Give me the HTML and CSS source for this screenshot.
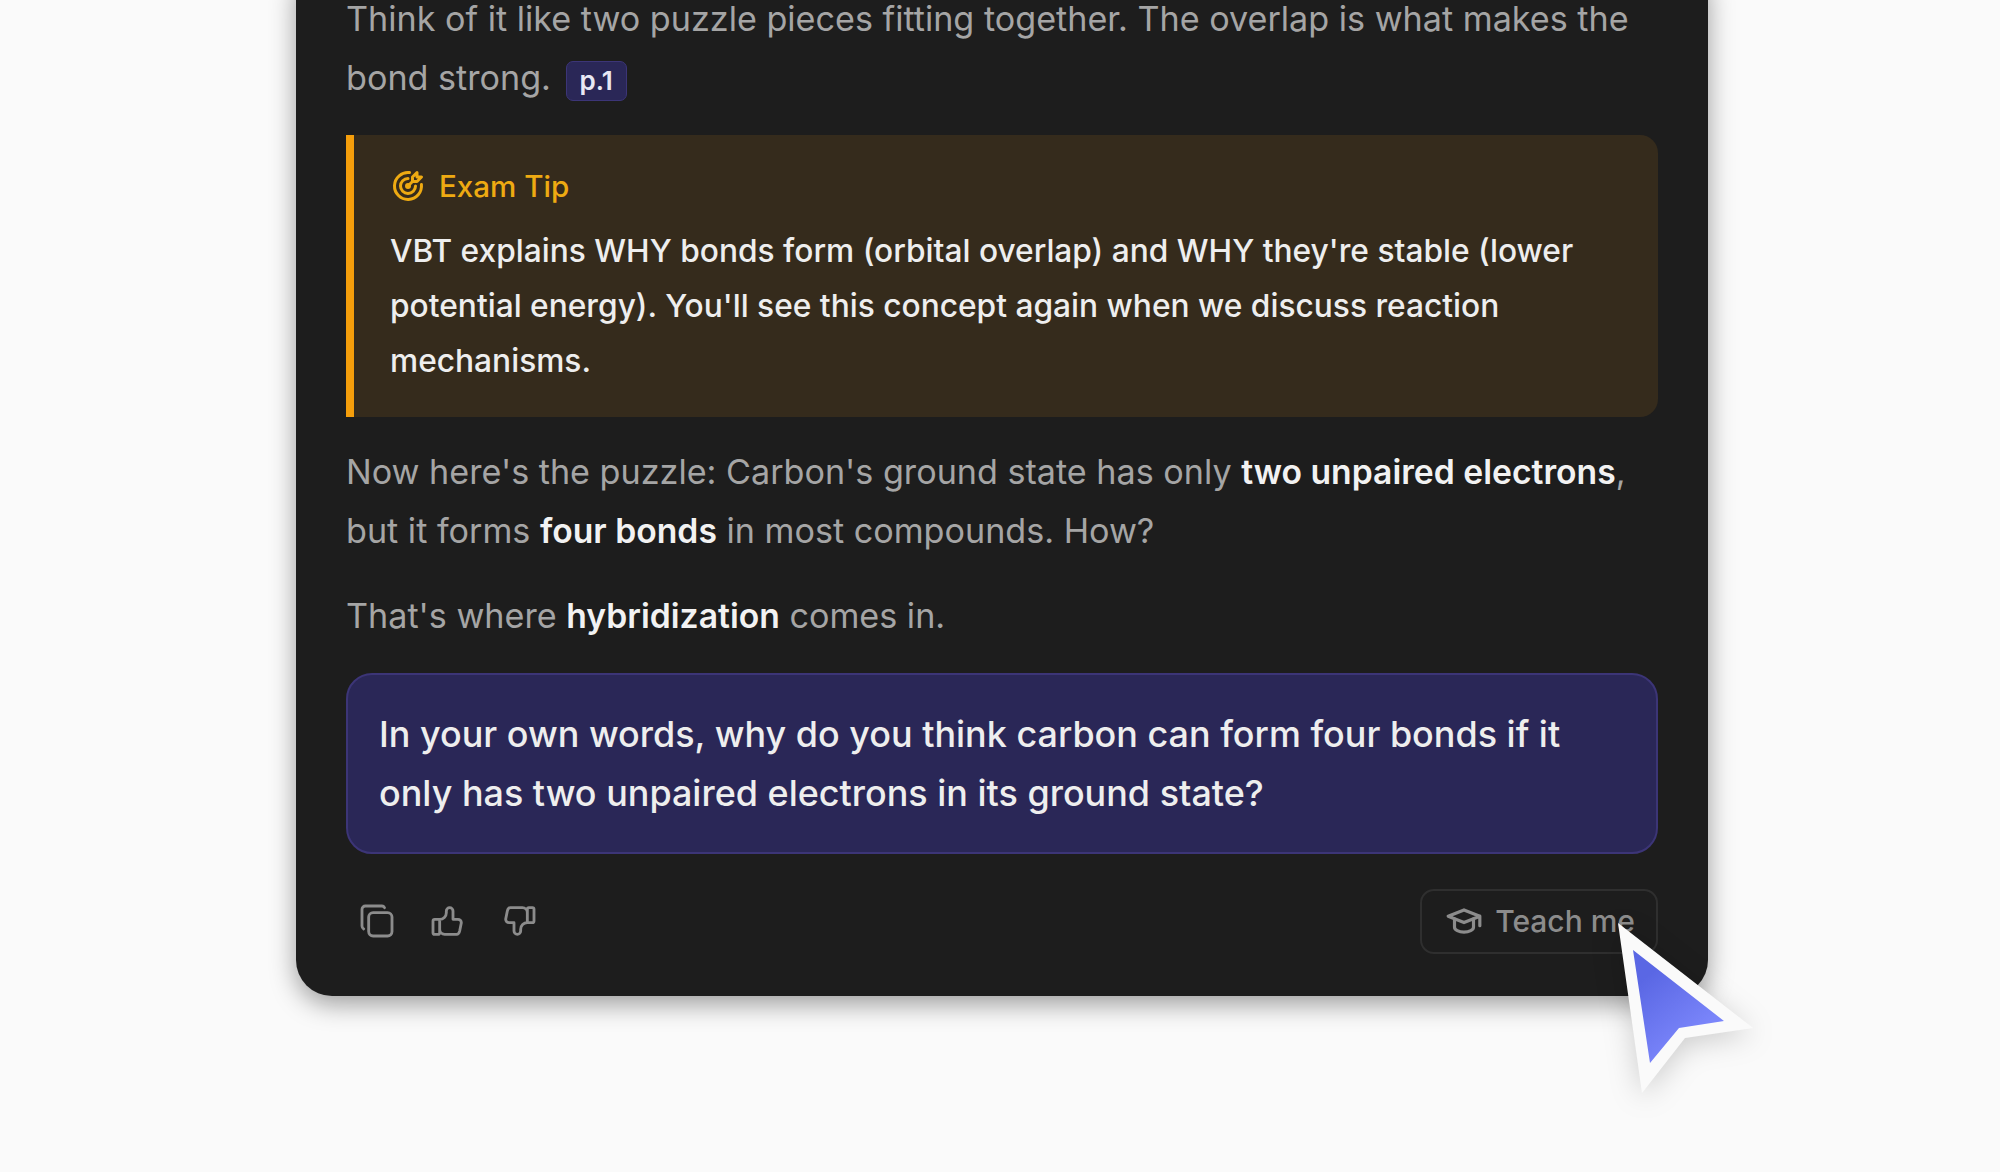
FILE: index.html
```html
<!DOCTYPE html>
<html lang="en">
<head>
    <meta charset="UTF-8">
    <title>Teach me</title>
    <link rel="stylesheet" href="styles.css">
</head>
<body>
    <div class="chat-card">
        <p class="para para-first">Think of it like two puzzle pieces fitting together. The overlap is what makes the bond strong. <span class="page-ref">p.1</span></p>

        <div class="tip-box">
            <div class="tip-title">
                <svg class="tip-icon" viewBox="0 0 24 24">
                    <path d="M11 12a1 1 0 1 0 2 0a1 1 0 0 0 -2 0"/>
                    <path d="M12 7a5 5 0 1 0 5 5"/>
                    <path d="M13 3.055a9 9 0 1 0 7.941 7.945"/>
                    <path d="M15 6v3h3l3 -3h-3v-3z"/>
                    <path d="M15 9l-3 3"/>
                </svg>
                <span>Exam Tip</span>
            </div>
            <p class="tip-text">VBT explains WHY bonds form (orbital overlap) and WHY they're stable (lower potential energy). You'll see this concept again when we discuss reaction mechanisms.</p>
        </div>

        <p class="para">Now here's the puzzle: Carbon's ground state has only <strong>two unpaired electrons</strong>, but it forms <strong>four bonds</strong> in most compounds. How?</p>
        <p class="para">That's where <strong>hybridization</strong> comes in.</p>

        <div class="question-box">In your own words, why do you think carbon can form four bonds if it only has two unpaired electrons in its ground state?</div>

        <div class="actions">
            <div class="action-icons">
                <svg class="icon" viewBox="0 0 24 24">
                    <path d="M7 9.667a2.667 2.667 0 0 1 2.667 -2.667h8.666a2.667 2.667 0 0 1 2.667 2.667v8.666a2.667 2.667 0 0 1 -2.667 2.667h-8.666a2.667 2.667 0 0 1 -2.667 -2.667z"/>
                    <path d="M4.012 16.737a2.005 2.005 0 0 1 -1.012 -1.737v-10c0 -1.1 .9 -2 2 -2h10c.75 0 1.158 .385 1.5 1"/>
                </svg>
                <svg class="icon" viewBox="0 0 24 24">
                    <path d="M7 11v8a1 1 0 0 1 -1 1h-2a1 1 0 0 1 -1 -1v-7a1 1 0 0 1 1 -1h3a4 4 0 0 0 4 -4v-1a2 2 0 0 1 4 0v5h3a2 2 0 0 1 2 2l-1 5a2 3 0 0 1 -2 2h-7a3 3 0 0 1 -3 -3"/>
                </svg>
                <svg class="icon" viewBox="0 0 24 24">
                    <path transform="rotate(180 12 12)" d="M7 11v8a1 1 0 0 1 -1 1h-2a1 1 0 0 1 -1 -1v-7a1 1 0 0 1 1 -1h3a4 4 0 0 0 4 -4v-1a2 2 0 0 1 4 0v5h3a2 2 0 0 1 2 2l-1 5a2 3 0 0 1 -2 2h-7a3 3 0 0 1 -3 -3"/>
                </svg>
            </div>
            <button class="teach-btn">
                <svg class="icon icon-cap" viewBox="0 0 24 24">
                    <path d="M22 9l-10 -4l-10 4l10 4l10 -4v6"/>
                    <path d="M6 10.6v5.4a6 3 0 0 0 12 0v-5.4"/>
                </svg>
                <span>Teach me</span>
            </button>
        </div>
    </div>

    <!-- cursor over the button -->
    <svg class="cursor" viewBox="0 0 180 210">
        <defs>
            <linearGradient id="cursorFill" x1="0.2" y1="0.2" x2="0.6" y2="0.8">
                <stop offset="0" stop-color="#5a67e4"/>
                <stop offset="1" stop-color="#7a85fa"/>
            </linearGradient>
        </defs>
        <polygon points="18,18 153,123 85,133 42,188" fill="#fafafa"/>
        <polygon points="33,45 124,116 79,123 50,158" fill="url(#cursorFill)"/>
    </svg>
</body>
</html>
```

FILE: styles.css
```css
body {
    margin: 0;
    height: 1172px;
    overflow: hidden;
    position: relative;
    background: #fafafa;
    font-family: Inter, 'Liberation Sans', sans-serif;
}

.chat-card {
    width: 1412px;
    box-sizing: border-box;
    margin: -40px 0 0 296px;
    padding: 30px 50px 42px;
    background: #1d1d1d;
    border-radius: 36px;
    box-shadow: 0 8px 26px rgba(0,0,0,0.38);
}

.para {
    margin: 0 0 27px;
    font-size: 34.15px;
    line-height: 58.5px;
    color: #a5a5a5;
}

.para-first {
    margin-bottom: 28px;
}

.para strong {
    color: #f2f2f2;
    font-size: 33.7px;
    font-weight: 600;
}

.page-ref {
    display: inline-block;
    margin-left: 5px;
    padding: 0 13px;
    font-size: 26px;
    line-height: 38px;
    font-weight: 600;
    color: #e8e8f4;
    background: #2a2757;
    border: 1px solid #3c3577;
    border-radius: 7px;
}

.tip-box {
    margin-bottom: 26px;
    padding: 27px 36px 29px;
    background: #352b1c;
    border-left: 8px solid #f59e0b;
    border-radius: 0 18px 18px 0;
}

.tip-title {
    display: flex;
    align-items: center;
    gap: 13px;
    font-size: 29.6px;
    font-weight: 500;
    line-height: 48px;
    color: #eeaa12;
}

.tip-icon {
    width: 36px;
    height: 36px;
    fill: none;
    stroke: currentColor;
    stroke-width: 2;
    stroke-linecap: round;
    stroke-linejoin: round;
}

.tip-text {
    margin: 13px 0 0;
    font-size: 31.7px;
    line-height: 55px;
    font-weight: 500;
    color: #eeeeee;
}

.question-box {
    padding: 30px 31px 29px;
    font-size: 35.95px;
    line-height: 59px;
    font-weight: 500;
    color: #eeeeee;
    background: #2a2757;
    border: 2px solid #3c3577;
    border-radius: 26px;
}

.actions {
    display: flex;
    align-items: center;
    justify-content: space-between;
    margin-top: 35px;
}

.action-icons {
    display: flex;
    gap: 31px;
    padding-left: 11px;
}

.icon {
    width: 40px;
    height: 40px;
    fill: none;
    stroke: #8c8c8c;
    stroke-width: 1.7;
    stroke-linecap: round;
    stroke-linejoin: round;
}

.icon-cap {
    width: 38px;
    height: 38px;
    stroke-width: 2;
}

.teach-btn {
    display: flex;
    align-items: center;
    gap: 12px;
    height: 65px;
    padding: 0 21px 0 23px;
    font-family: inherit;
    font-size: 30px;
    font-weight: 500;
    color: #8c8c8c;
    background: transparent;
    border: 2px solid #2f2f2f;
    border-radius: 14px;
}

.cursor {
    position: absolute;
    left: 1600px;
    top: 905px;
    width: 180px;
    height: 210px;
    filter: drop-shadow(0 6px 14px rgba(0,0,0,0.18));
}
```
